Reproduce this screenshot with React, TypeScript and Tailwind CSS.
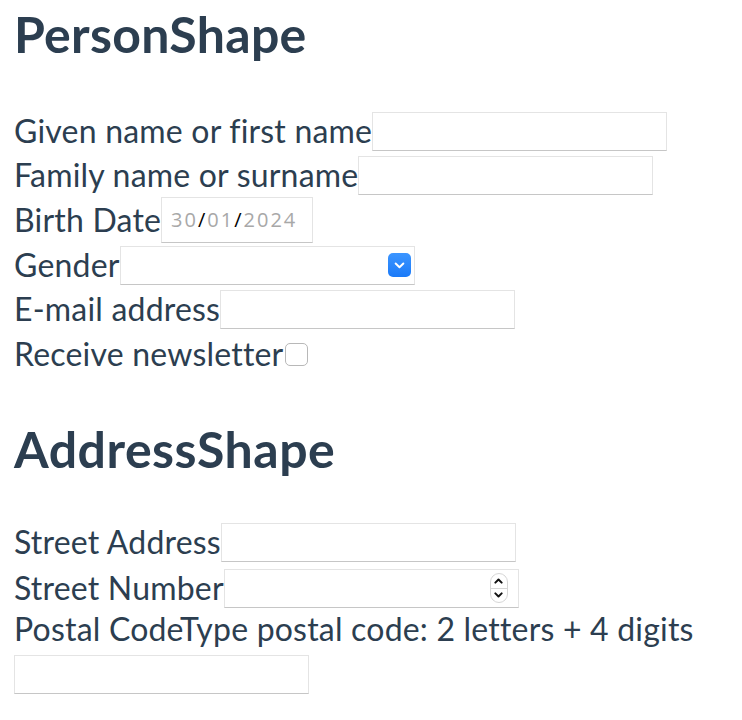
import React from 'react'

const field =
  'block h-[39px] w-[295px] shrink-0 appearance-none border border-[#e4e4e4] border-b-[#c6c6c6] bg-white outline-none'

function Row({ label, h = 'h-[44px]', children }: { label: string; h?: string; children: React.ReactNode }) {
  return (
    <div className={`flex items-center ${h}`}>
      <span className="whitespace-nowrap">{label}</span>
      {children}
    </div>
  )
}

function ChevronDown({ className, sw = 1.8 }: { className?: string; sw?: number }) {
  return (
    <svg viewBox="0 0 10 6" className={className} fill="none" stroke="currentColor" strokeWidth={sw} strokeLinecap="round" strokeLinejoin="round">
      <path d="M1.5 1.2 5 4.6 8.5 1.2" />
    </svg>
  )
}

export default function App() {
  return (
    <main className="min-h-screen bg-white px-[14px] text-[#2c3e50] font-['Lato','Noto_Sans',sans-serif]">
      {/* Person */}
      <h2 className="pt-[4px] text-[50px] font-bold leading-[1.2] tracking-[0.3px]">PersonShape</h2>
      <form className="mt-[45px] text-[32px] leading-none tracking-[0.2px]">
        <Row label="Given name or first name">
          <input className={field} />
        </Row>
        <Row label="Family name or surname">
          <input className={field} />
        </Row>
        <Row label="Birth Date" h="h-[46px]">
          <div className="flex h-[46px] w-[152px] shrink-0 items-center border border-[#e4e4e4] border-b-[#c6c6c6] pl-[9px] font-['Open_Sans',sans-serif] text-[20px] font-normal tracking-[2px] text-[#a8a8a8]">
            30<span className="text-black">/</span>01<span className="text-black">/</span>2024
          </div>
        </Row>
        <Row label="Gender">
          <div className="flex h-[39px] w-[295px] shrink-0 items-center justify-end border border-[#e4e4e4] border-b-[#c6c6c6] pr-[3px]">
            <div className="flex h-[24px] w-[23px] items-center justify-center rounded-[5px] bg-gradient-to-b from-[#3b95ff] to-[#1a7af8] text-white">
              <ChevronDown className="h-[7px] w-[11px]" />
            </div>
          </div>
        </Row>
        <Row label="E-mail address">
          <input className={field} />
        </Row>
        <Row label="Receive newsletter" h="h-[46px]">
          <div className="ml-[2px] h-[23px] w-[23px] shrink-0 rounded-[5px] border border-[#b8b8b8] bg-white" />
        </Row>
      </form>

      {/* Address */}
      <h2 className="mt-[42px] text-[50px] font-bold leading-[1.2] tracking-[0.5px]">AddressShape</h2>
      <form className="mt-[40px] text-[32px] leading-none tracking-[0.2px]">
        <Row label="Street Address" h="h-[46px]">
          <input className={field} />
        </Row>
        <Row label="Street Number" h="h-[46px]">
          <div className="flex h-[39px] w-[295px] shrink-0 items-center justify-end border border-[#e4e4e4] border-b-[#c6c6c6] pr-[10px]">
            <div className="flex h-[30px] w-[18px] flex-col overflow-hidden rounded-full border border-[#d6d6d6] text-[#111]">
              <div className="flex flex-1 items-center justify-center border-b border-[#d6d6d6]">
                <ChevronDown className="h-[6px] w-[9px] rotate-180" sw={2.2} />
              </div>
              <div className="flex flex-1 items-center justify-center">
                <ChevronDown className="h-[6px] w-[9px]" sw={2.2} />
              </div>
            </div>
          </div>
        </Row>
        <div className="flex h-[36px] items-center whitespace-nowrap">Postal CodeType postal code: 2 letters + 4 digits</div>
        <input className={`${field} mt-[8px]`} />
      </form>
    </main>
  )
}
